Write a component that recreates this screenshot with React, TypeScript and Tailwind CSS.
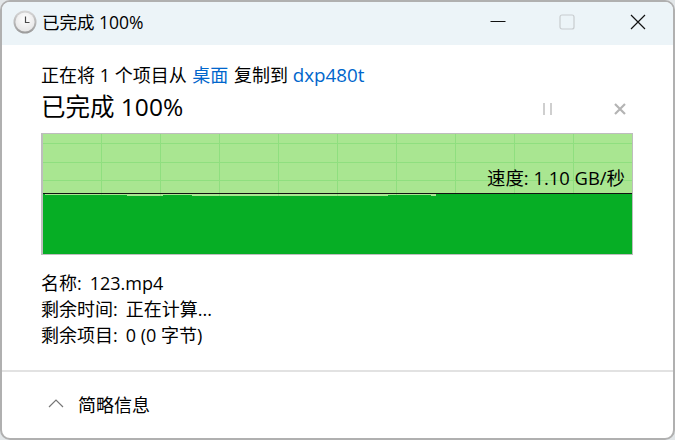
import React from "react";

function Chart() {
  const vs = [101, 160, 219, 278, 337, 396, 455, 514, 573].map((x) => x - 43 + 0.5);
  const hs = [143, 162, 180].map((y) => y - 134 + 0.5);
  const top = "M0 120 V60 H2 V61 H84 V62 H120 V61 H149 V62 H345 V61 H388 V62 H393 V60 H590 V120 Z";
  return (
    <svg width="590" height="120" viewBox="0 0 590 120" className="block absolute left-0 top-0">
      {vs.map((x) => (
        <line key={x} x1={x} x2={x} y1="0" y2="120" stroke="#8fdf7f" strokeWidth="1" />
      ))}
      {hs.map((y) => (
        <line key={y} x1="0" x2="590" y1={y} y2={y} stroke="#8fdf7f" strokeWidth="1" />
      ))}
      <path d={top} fill="#06ae25" />
      <rect x="0" y="59" width="590" height="1" fill="#111" />
    </svg>
  );
}

function ClockIcon() {
  return (
    <svg width="24" height="24" viewBox="0 0 24 24" className="shrink-0">
      <defs>
        <linearGradient id="rim" x1="0" y1="0" x2="0" y2="1">
          <stop offset="0" stopColor="#d8d8d8" />
          <stop offset="1" stopColor="#9a9a9a" />
        </linearGradient>
        <radialGradient id="face" cx="0.5" cy="0.35" r="0.7">
          <stop offset="0" stopColor="#ffffff" />
          <stop offset="1" stopColor="#e4e4e4" />
        </radialGradient>
      </defs>
      <circle cx="12" cy="12" r="11.5" fill="url(#rim)" />
      <circle cx="12" cy="12" r="9.6" fill="url(#face)" />
      <path d="M12.5 6.5 V12.5 H16.5" fill="none" stroke="#4a4a4a" strokeWidth="1.2" />
    </svg>
  );
}

function Row({ label, value }: { label: string; value: string }) {
  return (
    <div className="flex whitespace-nowrap">
      <span>{label}:</span>
      <span className="ml-[8px]">{value}</span>
    </div>
  );
}

export default function App() {
  return (
    <div
      className="w-[675px] h-[440px] bg-[#e2e6e8] overflow-hidden text-[18px] leading-[26px] text-black"
      style={{ fontFamily: '"Open Sans", "Noto Sans CJK SC", sans-serif' }}
    >
      <div className="w-full h-full flex flex-col bg-white border-2 border-[#b0b0b0] rounded-[10px] overflow-hidden">
        <div className="h-[43px] shrink-0 bg-[#ecf4f8] flex items-center pl-[11px] pb-[3px]">
          <ClockIcon />
          <span className="ml-[5px] text-[17.5px] whitespace-nowrap">已完成 100%</span>
          <div className="ml-auto flex items-center pr-[27px]">
            <svg width="16" height="16" viewBox="0 0 16 16" className="mr-[53px]">
              <rect x="0.5" y="7" width="15" height="1" fill="#111" />
            </svg>
            <svg width="16" height="16" viewBox="0 0 16 16" className="mr-[55px]">
              <rect x="1" y="1" width="14" height="14" rx="2" fill="none" stroke="#c8cccf" strokeWidth="1.2" />
            </svg>
            <svg width="16" height="16" viewBox="0 0 16 16">
              <path d="M1 1 L15 15 M15 1 L1 15" stroke="#111" strokeWidth="1.2" fill="none" />
            </svg>
          </div>
        </div>
        <div className="flex-1 flex flex-col px-[39px] pt-[17px]">
          <div className="whitespace-nowrap h-[26px]">
            正在将 1 个项目从 <span className="ml-[1px] text-[#0066cc]">桌面</span> <span className="ml-[1px]">复制到</span>{" "}
            <span className="text-[18.8px] text-[#0066cc]">dxp480t</span>
          </div>
          <div className="flex items-center h-[38px]">
            <span className="text-[24.5px] leading-[38px] whitespace-nowrap">已完成 100%</span>
            <div className="ml-auto flex items-center pr-[8px] pt-[3px]">
              <svg width="12" height="12" viewBox="0 0 12 12" className="mr-[60px]">
                <rect x="1" y="0" width="2" height="12" fill="#cfcfcf" />
                <rect x="8" y="0" width="2" height="12" fill="#cfcfcf" />
              </svg>
              <svg width="12" height="12" viewBox="0 0 12 12">
                <path d="M1 1 L11 11 M11 1 L1 11" stroke="#b4b4b4" strokeWidth="2.2" fill="none" />
              </svg>
            </div>
          </div>
          <div className="relative mt-[7px] w-[592px] h-[122px] border border-l-2 border-[#bdbdbd] bg-[#a9e691] overflow-hidden">
            <Chart />
            <div className="absolute right-[7px] top-[31px] text-[18.4px] leading-[26px] whitespace-nowrap">
              速度: 1.10 GB/秒
            </div>
          </div>
          <div className="mt-[15px]">
            <Row label="名称" value="123.mp4" />
            <Row label="剩余时间" value="正在计算..." />
            <Row label="剩余项目" value="0 (0 字节)" />
          </div>
        </div>
        <div className="h-[68px] shrink-0 border-t-2 border-[#e2e2e2] flex items-center pl-[46px]">
          <svg width="16" height="10" viewBox="0 0 16 10" className="mb-[2px]">
            <path d="M1 8 L8 1 L15 8" fill="none" stroke="#777" strokeWidth="1.2" />
          </svg>
          <span className="ml-[14px]">简略信息</span>
        </div>
      </div>
    </div>
  );
}
